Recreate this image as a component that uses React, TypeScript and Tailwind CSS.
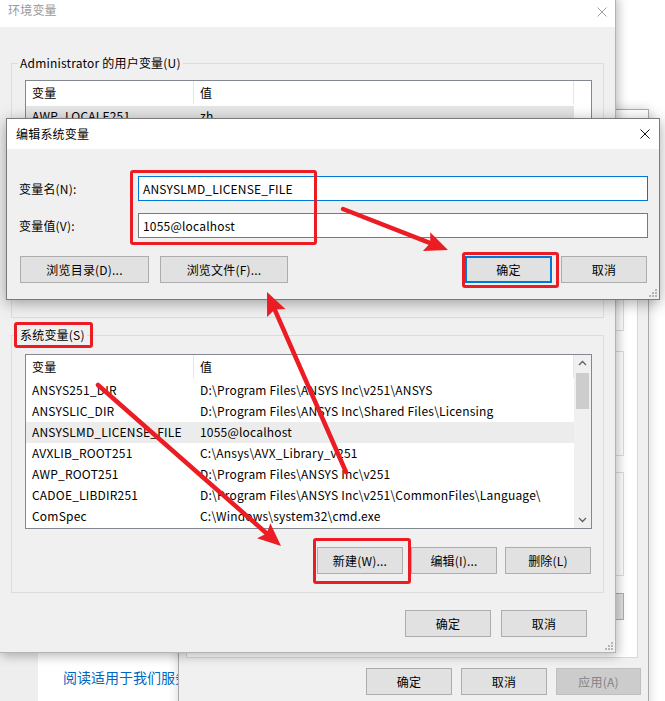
import React from 'react';
import clsx from 'clsx';

const sysRows = [
  ['ANSYS251_DIR', 'D:\\Program Files\\ANSYS Inc\\v251\\ANSYS'],
  ['ANSYSLIC_DIR', 'D:\\Program Files\\ANSYS Inc\\Shared Files\\Licensing'],
  ['ANSYSLMD_LICENSE_FILE', '1055@localhost'],
  ['AVXLIB_ROOT251', 'C:\\Ansys\\AVX_Library_v251'],
  ['AWP_ROOT251', 'D:\\Program Files\\ANSYS Inc\\v251'],
  ['CADOE_LIBDIR251', 'D:\\Program Files\\ANSYS Inc\\v251\\CommonFiles\\Language\\'],
  ['ComSpec', 'C:\\Windows\\system32\\cmd.exe'],
];

const userRows = [
  ['AWP_LOCALE251', 'zh'],
  ['OneDrive', 'C:\\Users\\Administrator\\OneDrive'],
  ['Path', 'C:\\Users\\Administrator\\AppData\\Local\\Microsoft\\WindowsApps;'],
  ['TEMP', 'C:\\Users\\Administrator\\AppData\\Local\\Temp'],
  ['TMP', 'C:\\Users\\Administrator\\AppData\\Local\\Temp'],
];

const CloseX = ({ color }: { color: string }) => (
  <svg width="10" height="10" viewBox="0 0 10 10">
    <path d="M0.5 0.5 L9.5 9.5 M9.5 0.5 L0.5 9.5" stroke={color} strokeWidth="1" />
  </svg>
);

const Grip = () => (
  <svg width="9" height="9" viewBox="0 0 9 9">
    {[[6, 0], [3, 3], [6, 3], [0, 6], [3, 6], [6, 6]].map(([x, y], i) => (
      <rect key={i} x={x} y={y} width="2" height="2" fill="#b5b5b5" />
    ))}
  </svg>
);

const Btn = ({
  children,
  w = 'w-[86px]',
  focus,
  disabled,
}: {
  children: React.ReactNode;
  w?: string;
  focus?: boolean;
  disabled?: boolean;
}) => (
  <div
    className={clsx(
      'h-[27px] shrink-0 flex items-center justify-center',
      w,
      focus && 'border-2 border-[#0078d7] bg-[#e1e1e1]',
      !focus && !disabled && 'border border-[#adadad] bg-[#e1e1e1]',
      disabled && 'border border-[#bfbfbf] bg-[#cccccc] text-[#838383]'
    )}
  >
    {children}
  </div>
);

const Chevron = ({ up }: { up?: boolean }) => (
  <svg width="17" height="17" viewBox="0 0 17 17">
    <polyline
      points={up ? '5,10 8.5,6.5 12,10' : '5,7 8.5,10.5 12,7'}
      fill="none"
      stroke="#606060"
      strokeWidth="1.3"
    />
  </svg>
);

const VarList = ({
  rows,
  selected,
  selBg,
  scroll,
}: {
  rows: string[][];
  selected: number;
  selBg: string;
  scroll?: boolean;
}) => (
  <div className="h-[175px] border border-[#828790] bg-white flex overflow-hidden">
    <div className="flex-1 flex flex-col">
      <div className="h-[25px] flex shrink-0 pb-[2px]">
        <div className="w-[168px] pl-[6px] flex items-center border-r border-[#e5e5e5]">变量</div>
        <div className="flex-1 pl-[6px] flex items-center border-r border-[#e5e5e5]">值</div>
      </div>
      {rows.map(([k, v], i) => (
        <div key={k} className={clsx('h-[21px] flex items-center shrink-0 whitespace-nowrap pb-[1px]', i === selected && selBg)}>
          <div className="w-[168px] pl-[6px] overflow-hidden">{k}</div>
          <div className="flex-1 pl-[6px] overflow-hidden">{v}</div>
        </div>
      ))}
    </div>
    {scroll ? (
      <div className="w-[17px] bg-[#f0f0f0] flex flex-col">
        <Chevron up />
        <div className="mt-[1px] mx-[2px] h-[36px] bg-[#cdcdcd]" />
        <div className="flex-1" />
        <Chevron />
      </div>
    ) : (
      <div className="w-[17px] bg-white" />
    )}
  </div>
);

const Arrow = ({ x1, y1, x2, y2 }: { x1: number; y1: number; x2: number; y2: number }) => {
  const dx = x2 - x1;
  const dy = y2 - y1;
  const len = Math.hypot(dx, dy);
  const ux = dx / len;
  const uy = dy / len;
  const hl = 23;
  const hw = 10;
  const bx = x2 - ux * hl;
  const by = y2 - uy * hl;
  const nx = -uy;
  const ny = ux;
  const pts = `${x2},${y2} ${bx + nx * hw},${by + ny * hw} ${bx + ux * 4},${by + uy * 4} ${bx - nx * hw},${by - ny * hw}`;
  return (
    <g>
      <line x1={x1} y1={y1} x2={bx + ux * 4} y2={by + uy * 4} stroke="#ec1c24" strokeWidth="4.5" strokeLinecap="round" />
      <polygon points={pts} fill="#ec1c24" />
    </g>
  );
};

const RedBox = ({ cls }: { cls: string }) => (
  <div className={clsx('absolute border-[3px] border-[#ec1c24] rounded-[3px]', cls)} />
);

export default function App() {
  return (
    <div className="relative w-[665px] h-[701px] overflow-hidden bg-white text-[12px] tracking-[0.2px] text-black font-['Microsoft_YaHei_UI','Noto_Sans_CJK_SC',sans-serif]">
      {/* settings window far behind */}
      <div className="absolute inset-0 flex">
        <div className="w-[38px] bg-[#eeeeee]" />
        <div className="flex-1 bg-white flex flex-col justify-end pl-[25px] pb-[14px]">
          <div className="text-[14px] leading-[20px] tracking-normal text-[#0067c0]">阅读适用于我们服务的条款</div>
        </div>
      </div>

      {/* system properties window */}
      <div className="absolute left-[178px] top-[109px] w-[471px] h-[610px] border border-[#aaaaaa] bg-[#f0f0f0] flex flex-col shadow-[0_0_10px_rgba(0,0,0,0.18)]">
        <div className="h-[30px] bg-white shrink-0" />
        <div className="flex-1 flex flex-col pl-[7px] pr-[10px]">
          <div className="mt-[30px] h-[488px] border border-[#d9d9d9] bg-white flex flex-col pl-[10px] pr-[13px]">
            <div className="mt-[9px] h-[151px] border border-[#dcdcdc]" />
            <div className="mt-[20px] h-[105px] border border-[#dcdcdc]" />
            <div className="mt-[16px] h-[104px] border border-[#dcdcdc]" />
            <div className="mt-[17px] flex justify-end">
              <Btn w="w-[75px]">设置(T)...</Btn>
            </div>
          </div>
          <div className="mt-[10px] flex justify-end gap-[9px] mr-[-3px]">
            <Btn w="w-[86px]">确定</Btn>
            <Btn w="w-[86px]">取消</Btn>
            <Btn w="w-[85px]" disabled>
              应用(A)
            </Btn>
          </div>
        </div>
      </div>

      {/* environment variables dialog (inactive) */}
      <div className="absolute left-[-1px] top-[-5px] w-[617px] h-[658px] border border-[#b4b4b4] flex flex-col shadow-[2px_3px_10px_rgba(0,0,0,0.28)]">
        <div className="h-[31px] bg-white shrink-0 flex items-end justify-between pl-[8px] pr-[8px] pb-[10px]">
          <span className="text-[#999999] leading-[14px]">环境变量</span>
          <CloseX color="#a0a0a0" />
        </div>
        <div className="relative flex-1 bg-[#f0f0f0] px-[11px] flex flex-col">
          <div className="mt-[36px] h-[255px] border border-[#dcdcdc] pl-[13px] pr-[11px] flex flex-col">
            <div className="-mt-[10px] -ml-[7px] w-fit px-[2px] bg-[#f0f0f0] leading-[18px]">Administrator 的用户变量(U)</div>
            <div className="mt-[8px]">
              <VarList rows={userRows} selected={0} selBg="bg-[#e5e5e5]" />
            </div>
            <div className="mt-[18px] flex justify-end gap-[8px]">
              <Btn>新建(N)...</Btn>
              <Btn>编辑(E)...</Btn>
              <Btn>删除(D)</Btn>
            </div>
          </div>

          <div className="mt-[17px] h-[258px] border border-[#dcdcdc] pl-[13px] pr-[11px] flex flex-col">
            <div className="-mt-[10px] -ml-[7px] w-fit px-[2px] bg-[#f0f0f0] leading-[18px]">系统变量(S)</div>
            <div className="mt-[10px]">
              <VarList rows={sysRows} selected={2} selBg="bg-[#ececec]" scroll />
            </div>
            <div className="mt-[18px] flex justify-end gap-[8px] pr-[1px]">
              <Btn>新建(W)...</Btn>
              <Btn>编辑(I)...</Btn>
              <Btn>删除(L)</Btn>
            </div>
          </div>

          <div className="mt-[17px] flex justify-end gap-[10px] pr-[17px]">
            <Btn>确定</Btn>
            <Btn>取消</Btn>
          </div>
          <div className="absolute right-[1px] bottom-[1px]">
            <Grip />
          </div>
        </div>
      </div>

      {/* edit system variable dialog (active) */}
      <div className="absolute left-[6px] top-[118px] w-[654px] h-[182px] border border-[#7a7a7a] flex flex-col shadow-[0_3px_14px_rgba(0,0,0,0.35)]">
        <div className="h-[30px] bg-white shrink-0 flex items-center justify-between pl-[9px] pr-[9px]">
          <span>编辑系统变量</span>
          <CloseX color="#111111" />
        </div>
        <div className="relative flex-1 bg-[#f0f0f0] pt-[27px] pl-[12px] pr-[11px] flex flex-col">
          <div className="flex items-center h-[25px]">
            <div className="w-[119px]">变量名(N):</div>
            <div className="flex-1 h-[25px] border border-[#0078d7] bg-white pl-[4px] flex items-center">ANSYSLMD_LICENSE_FILE</div>
          </div>
          <div className="mt-[12px] flex items-center h-[25px]">
            <div className="w-[119px]">变量值(V):</div>
            <div className="flex-1 h-[25px] border border-[#7a7a7a] bg-white pl-[4px] flex items-center">1055@localhost</div>
          </div>
          <div className="mt-[18px] flex items-center pl-[1px] pr-[1px]">
            <Btn w="w-[129px]">浏览目录(D)...</Btn>
            <div className="ml-[11px]">
              <Btn w="w-[128px]">浏览文件(F)...</Btn>
            </div>
            <div className="flex-1" />
            <Btn w="w-[87px]" focus>
              确定
            </Btn>
            <div className="ml-[9px]">
              <Btn w="w-[86px]">取消</Btn>
            </div>
          </div>
          <div className="absolute right-[1px] bottom-[1px]">
            <Grip />
          </div>
        </div>
      </div>

      {/* annotations */}
      <RedBox cls="left-[130px] top-[170px] w-[187px] h-[75px]" />
      <RedBox cls="left-[462px] top-[252px] w-[97px] h-[36px]" />
      <RedBox cls="left-[14px] top-[322px] w-[79px] h-[26px]" />
      <RedBox cls="left-[313px] top-[538px] w-[98px] h-[46px]" />
      <svg className="absolute inset-0 pointer-events-none" width="665" height="701">
        <Arrow x1={343} y1={209} x2={448} y2={250} />
        <Arrow x1={346} y1={472} x2={267} y2={292} />
        <Arrow x1={98} y1={385} x2={281} y2={546} />
      </svg>
    </div>
  );
}
